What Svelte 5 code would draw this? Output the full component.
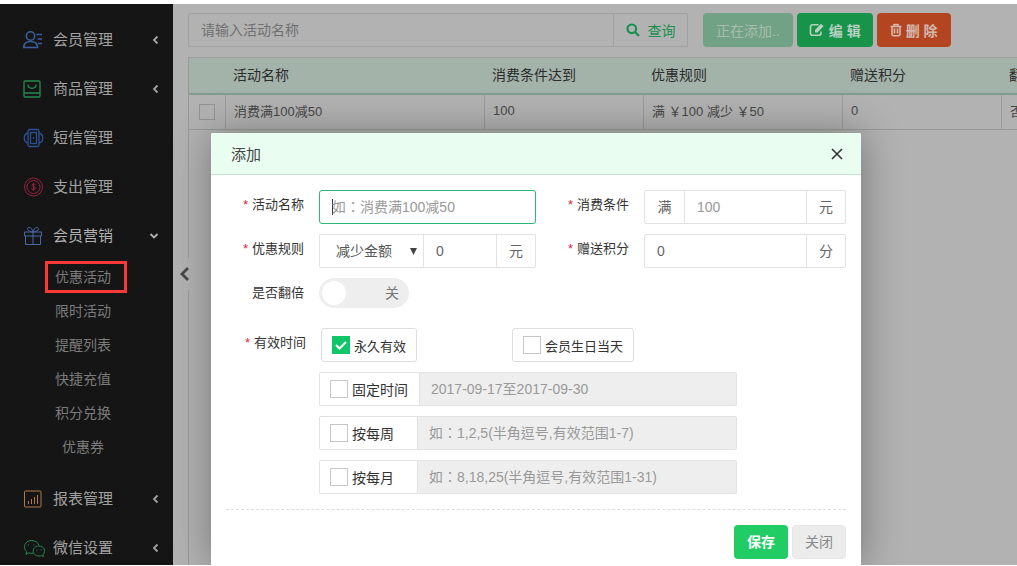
<script>
  let name = $state('');
  let condition = $state('');
  let discount = $state('0');
  let points = $state('0');
  let double = $state(false);
  let forever = $state(true);
  let birthday = $state(false);

  const above = [
    { icon: 'member', label: '会员管理', arrow: 'left' },
    { icon: 'goods', label: '商品管理', arrow: 'left' },
    { icon: 'sms', label: '短信管理', arrow: '' },
    { icon: 'expense', label: '支出管理', arrow: '' },
    { icon: 'gift', label: '会员营销', arrow: 'down', open: true }
  ];
  const children = ['优惠活动', '限时活动', '提醒列表', '快捷充值', '积分兑换', '优惠券'];
  const below = [
    { icon: 'report', label: '报表管理', arrow: 'left' },
    { icon: 'wechat', label: '微信设置', arrow: 'left' }
  ];
  const headers = ['活动名称', '消费条件达到', '优惠规则', '赠送积分', '翻倍'];
  const cells = ['消费满100减50', '100', '满 ￥100 减少 ￥50', '0', '否'];
  const periods = [
    { id: 'fixed', label: '固定时间', hint: '2017-09-17至2017-09-30' },
    { id: 'weekly', label: '按每周', hint: '如：1,2,5(半角逗号,有效范围1-7)' },
    { id: 'monthly', label: '按每月', hint: '如：8,18,25(半角逗号,有效范围1-31)' }
  ];
</script>

{#snippet icon(kind)}
  <svg class="icon {kind}" viewBox="0 0 22 20" aria-hidden="true">
    {#if kind === 'member'}
      <circle cx="7.500" cy="6" r="4.200" />
      <path d="M.8 17.500C.8 13.500 3.200 11.500 7.500 11.500s7 2 7 6zM13.500 4.500h5.500M14.500 9h4.500M15 13.500h4" />
    {:else if kind === 'goods'}
      <rect x="1" y="2" width="16" height="16" rx="1" />
      <path d="M1 14h16M5 5.500c0 5 8 5 8 0" />
    {:else if kind === 'sms'}
      <rect x="5" y="1.500" width="11" height="17" rx="1.500" />
      <rect x="7.500" y="4.500" width="6" height="11" />
      <path d="M5 5C0 6 0 14 5 15M16 5c5 1 5 9 0 10M10.500 9v2" />
    {:else if kind === 'expense'}
      <circle cx="10.500" cy="10" r="9" />
      <circle cx="10.500" cy="10" r="6.500" />
      <path d="M12.500 8c-1-1.500-4-1-3.500.5s3.500 1 3.500 2.500-3 2-4 .5M10.500 6v8" />
    {:else if kind === 'gift'}
      <path d="M1.500 6h17v4h-17zM2.500 10v8.500h15V10M10 6v12.500M9.500 6C4 5.500 3.500 1.500 6 1.500S9.500 4 10 6c.5-2 1.500-4.500 4-4.500s2 4-3.500 4.500" />
    {:else if kind === 'report'}
      <rect x="1.500" y="2" width="16.500" height="16" rx="1" />
      <path d="M5.500 12v3M8.500 10v5M11.500 8v7M14.500 6v9" />
    {:else}
      <path d="M10 15.200c-1.500.3-3 .1-4.300-.4L3 16.500l.6-2.900C-.5 10 1.500 2.500 8.500 2.500c4 0 6.800 2.300 7.500 5" />
      <path d="M16 8c-7.500 0-8 10 0 10 1 0 1.800-.2 2.500-.5l2 1-.5-2C23.500 13 21 8 16 8z" />
      <path d="M5.500 6.500v1M11 6.500v1M14 11.500v1M18 11.500v1" />
    {/if}
  </svg>
{/snippet}

{#snippet entry(item)}
  <a class="entry" class:open={item.open} href="#menu">
    {@render icon(item.icon)}
    <span>{item.label}</span>
    {#if item.arrow}
      <svg class="arrow {item.arrow}" viewBox="0 0 10 10" aria-hidden="true">
        <path d={item.arrow === 'left' ? 'M6.500 1.500 3 5l3.500 3.500' : 'M1.500 3l3.500 3.500L8.500 3'} />
      </svg>
    {/if}
  </a>
{/snippet}

<div class="page">
  <nav class="sidebar">
    {#each above as item}{@render entry(item)}{/each}
    <div class="submenu">
      {#each children as child, i}
        <a href="#sub" class:marked={i === 0}>{child}</a>
      {/each}
    </div>
    {#each below as item}{@render entry(item)}{/each}
  </nav>

  <main class="content">
    <div class="toolbar">
      <div class="search">
        <input type="text" aria-label="活动名称" placeholder="请输入活动名称" />
        <button type="button">
          <svg viewBox="0 0 14 14" width="14" height="14" aria-hidden="true"><circle cx="5.800" cy="5.800" r="4.300" /><path d="M9 9l4 4" /></svg>
          查询
        </button>
      </div>
      <div class="actions">
        <button type="button" class="adding">正在添加..</button>
        <button type="button" class="edit">
          <svg viewBox="0 0 16 14" width="16" height="14" aria-hidden="true"><path d="M9.500 1.800H3.500A2 2 0 0 0 1.500 3.800v6.500a2 2 0 0 0 2 2H10a2 2 0 0 0 2-2V8.500" /><path class="solid" d="M6 7 12 .8l2.600 2.500L8.500 9.500H6z" /></svg>
          编 辑
        </button>
        <button type="button" class="remove">
          <svg viewBox="0 0 12 14" width="12" height="14" aria-hidden="true"><path d="M.5 3.500h11M2 3.500v7.700a1.500 1.500 0 0 0 1.500 1.500h5a1.500 1.500 0 0 0 1.500-1.500V3.500M4 3V1.500h4V3M4.500 5.500v5M7.500 5.500v5" /></svg>
          删 除
        </button>
      </div>
    </div>

    <div class="grid">
      <table>
        <colgroup><col class="c-check" /><col class="c-name" /><col class="c-cond" /><col class="c-rule" /><col class="c-cond" /><col class="c-cond" /></colgroup>
        <thead>
          <tr><th></th>{#each headers as h}<th>{h}</th>{/each}</tr>
        </thead>
        <tbody>
          <tr>
            <td class="pick"><input type="checkbox" aria-label="消费满100减50" /></td>
            {#each cells as c}<td>{c}</td>{/each}
          </tr>
        </tbody>
      </table>
    </div>
    <button type="button" class="collapse" aria-label="收起">
      <svg viewBox="0 0 10 16" width="10" height="16" aria-hidden="true"><path d="M9 2 3 8l6 6" /></svg>
    </button>
  </main>

  <div class="dialog" role="dialog" aria-labelledby="dialog-title">
    <header>
      <h2 id="dialog-title">添加</h2>
      <button type="button" aria-label="关闭">
        <svg viewBox="0 0 12 12" width="12" height="12" aria-hidden="true"><path d="M1 1l10 10M11 1 1 11" /></svg>
      </button>
    </header>
    <form>
      <div class="fields">
        <label class="caption" for="name"><i>*</i>活动名称</label>
        <div class="group focused"><input id="name" type="text" placeholder="如：消费满100减50" bind:value={name} /></div>
        <label class="caption" for="condition"><i>*</i>消费条件</label>
        <div class="group">
          <span class="unit">满</span>
          <input id="condition" type="text" placeholder="100" bind:value={condition} />
          <span class="unit">元</span>
        </div>

        <label class="caption" for="discount"><i>*</i>优惠规则</label>
        <div class="group">
          <div class="select">
            <select aria-label="优惠规则"><option>减少金额</option></select>
            <svg viewBox="0 0 7 7" width="7" height="7" aria-hidden="true"><path d="M0 0h7L3.500 7z" /></svg>
          </div>
          <input id="discount" type="text" bind:value={discount} />
          <span class="unit">元</span>
        </div>
        <label class="caption" for="points"><i>*</i>赠送积分</label>
        <div class="group">
          <input id="points" type="text" bind:value={points} />
          <span class="unit">分</span>
        </div>

        <label class="caption" for="double">是否翻倍</label>
        <label class="switch">
          <input id="double" type="checkbox" bind:checked={double} />
          <span>关</span>
        </label>
      </div>

      <fieldset>
        <legend class="caption"><i>*</i>有效时间</legend>
        <div class="periods">
          <div class="pair">
            <label class="tick"><input type="checkbox" bind:checked={forever} />永久有效</label>
            <label class="tick"><input type="checkbox" bind:checked={birthday} />会员生日当天</label>
          </div>
          {#each periods as p}
            <div class="group period">
              <label class="tick {p.id}"><input type="checkbox" />{p.label}</label>
              <input type="text" aria-label={p.label} placeholder={p.hint} disabled />
            </div>
          {/each}
        </div>
      </fieldset>

      <footer>
        <button type="button" class="save">保存</button>
        <button type="button" class="close">关闭</button>
      </footer>
    </form>
  </div>
</div>

<style>
  :global(body) { margin: 0; background: #fff; }
  .page, .page :is(input, select, button) {
    font-family: "Liberation Sans", "Noto Sans CJK SC", sans-serif;
    font-size: 14px;
  }
  .page * { box-sizing: border-box; }
  .page {
    position: relative;
    display: flex;
    height: 100vh;
    box-sizing: border-box;
    border-top: 4px solid #fff;
    border-bottom: 1px solid #fff;
    overflow: hidden;
  }
  button { cursor: pointer; padding: 0; border: 0; background: none; }
  input { min-width: 0; outline: 0; border-radius: 0; }
  svg { fill: none; stroke: currentColor; }

  .sidebar { flex: 0 0 173px; padding-top: 11px; background: #151515; }
  .entry {
    display: flex;
    align-items: center;
    height: 49px;
    padding: 0 12px 0 23px;
    color: #a2a2a2;
    font-size: 15px;
    text-decoration: none;
  }
  .entry.open { color: #b2b2b2; }
  .entry span { flex: 1; padding-bottom: 2px; }
  .icon { width: 22px; height: 20px; margin-right: 8px; }
  .member { color: #3b5f9e; stroke-width: 1.6; }
  .goods { color: #23894f; stroke-width: 1.3; }
  .sms { color: #2c5296; stroke-width: 1.3; }
  .expense { color: #99213f; }
  .gift { color: #4668a8; }
  .report { color: #b07a4c; }
  .wechat { color: #278552; }
  .arrow { width: 10px; height: 10px; stroke-width: 1.8; }
  .arrow.down { margin-right: 2px; }
  .submenu { display: flex; flex-direction: column; padding: 0 46px 10px 45px; }
  .submenu a {
    height: 34px;
    line-height: 34px;
    color: #7b7b7b;
    text-align: center;
    text-decoration: none;
    white-space: nowrap;
    margin-right: 6px;
  }
  .submenu a.marked { margin: 1px 0 1px; height: 32px; line-height: 26px; border: 3px solid #f93838; padding-right: 6px; }

  .content { position: relative; flex: 1; min-width: 0; display: flex; flex-direction: column; padding: 9px 0 0 15px; background: #b2b2b2; }
  .toolbar { display: flex; gap: 15px; margin-bottom: 10px; }
  .search { display: flex; flex: 0 1 500px; height: 34px; border: 1px solid #a1a1a1; border-radius: 2px; }
  .search input { flex: 1; padding: 0 12px; border: 0; background: none; }
  .search input::placeholder { color: #707070; opacity: 1; }
  .search button { display: flex; align-items: center; justify-content: center; gap: 8px; width: 74px; padding-bottom: 1px; border-left: 1px solid #a1a1a1; color: #159050; }
  .search svg { stroke-width: 2.2; }
  .actions { display: flex; gap: 4px; }
  .actions button { display: flex; align-items: center; justify-content: center; gap: 4px; height: 34px; padding: 0 12px 1px; border-radius: 4px; color: #b8cfc1; font-weight: bold; white-space: nowrap; }
  .actions svg { stroke-width: 1.6; }
  .actions .solid { fill: currentColor; stroke: none; }
  .actions .adding { padding: 0 13px 1px; background: #71a285; color: #a9bcb0; font-weight: normal; }
  .actions .edit { background: #179449; }
  .actions .remove { padding: 0 13px 1px; background: #b34621; color: #d5b9ae; }

  .grid { flex: 1; border-left: 1px solid #999; border-top: 1px solid #9b9b9b; overflow: hidden; }
  table { table-layout: fixed; width: 972px; border-collapse: separate; border-spacing: 0; }
  .c-check { width: 37px; }
  .c-name { width: 259px; }
  .c-cond { width: 159px; }
  .c-rule { width: 199px; }
  th { height: 37px; padding: 0 7px 3px; background: #a4b3aa; border-bottom: 2px solid #809c8e; color: #2c2c2c; font-weight: normal; text-align: left; }
  td { height: 35px; padding: 0 8px 3px; border-bottom: 1px solid #999; border-right: 1px solid #9c9c9c; color: #474747; font-size: 13px; white-space: nowrap; }
  .pick { padding: 0 0 0 10px; }
  input[type="checkbox"] { appearance: none; margin: 0; }
  .pick input { display: block; width: 16px; height: 16px; border: 1px solid #949494; }
  .collapse { position: absolute; left: 3px; top: 254px; width: 15px; height: 32px; background: #b2b2b2; color: #484848; }
  .collapse svg { display: block; margin-left: 3px; stroke-width: 2.8; }

  .dialog {
    position: absolute;
    left: 211px;
    top: 129px;
    bottom: 0;
    width: 650px;
    background: #fff;
    border-radius: 2px 2px 0 0;
    box-shadow: 1px 1px 40px rgba(0, 0, 0, 0.35);
  }
  header { display: flex; align-items: center; justify-content: space-between; height: 42px; padding: 0 18px 0 20px; background: #eafdf1; border-bottom: 1px solid #c9dfd3; border-radius: 2px 2px 0 0; }
  h2 { margin: 0; padding-bottom: 1px; color: #444; font-size: 15px; font-weight: normal; }
  header button { display: flex; color: #333; }
  header svg { stroke-width: 1.6; }
  form { padding: 15px; }
  .fields { display: grid; grid-template-columns: 93px 217px 108px minmax(0, 1fr); grid-auto-rows: 34px; row-gap: 10px; }
  .caption { padding-right: 15px; color: #333; font-size: 13px; line-height: 30px; text-align: right; }
  .caption i { margin-right: 4px; color: #e2243e; font-style: normal; }
  .group { display: flex; height: 34px; border: 1px solid #e2e2e2; border-radius: 2px; color: #666; }
  .group > input { flex: 1; padding: 0 12px; border: 0; background: none; color: #666; }
  .group input::placeholder { color: #999; opacity: 1; font-family: "Liberation Sans", "Noto Sans CJK TC", sans-serif; }
  .focused { border-color: #28b878; border-radius: 3px; background: linear-gradient(#334, #334) 12px center / 1px 16px no-repeat; }
  .unit { flex: 0 0 39px; line-height: 32px; text-align: center; }
  .group > * + * { border-left: 1px solid #e2e2e2 !important; }
  .select { position: relative; flex: 0 0 103px; }
  .select svg { position: absolute; right: 6px; top: 13px; fill: #444; stroke: none; }
  select { appearance: none; width: 100%; height: 32px; padding: 0 16px; border: 0; outline: 0; background: none; color: #555; }
  .switch { position: relative; width: 90px; height: 30px; border-radius: 15px; background: #eee; color: #777; line-height: 30px; }
  .switch input { position: absolute; left: 3px; top: 3px; width: 24px; height: 24px; border-radius: 50%; background: #fff; }
  .switch input:checked { left: 63px; }
  .switch span { padding-left: 66px; }

  fieldset { display: flex; margin: 16px 0 0; padding: 0; border: 0; min-width: 0; }
  legend { float: left; width: 95px; flex: none; }
  .periods { flex: 1; display: flex; flex-direction: column; gap: 10px; margin: 0 109px 0 -2px; }
  .pair { display: grid; grid-template-columns: 191px 1fr; justify-items: start; padding-left: 2px; }
  .tick { display: flex; align-items: center; gap: 4px; color: #333; font-size: 13px; white-space: nowrap; }
  .pair .tick { height: 34px; padding: 0 10px; border: 1px solid #dedede; border-radius: 3px; }
  .tick input { width: 18px; height: 18px; border: 1px solid #c6c6c6; background: #fff; }
  .tick input:checked { border-color: #0fc768; background: #0fc768 url("data:image/svg+xml,%3Csvg xmlns='http://www.w3.org/2000/svg' viewBox='0 0 16 16'%3E%3Cpath d='M3 8l3.500 3.500L13 5' fill='none' stroke='white' stroke-width='2'/%3E%3C/svg%3E") center / 16px 16px no-repeat; }
  .period .tick { flex: 0 0 97px; padding-left: 10px; font-size: 14px; }
  .period .fixed { flex-basis: 99px; }
  .period > input { padding-left: 11px; background: #eee; }

  footer { display: flex; justify-content: flex-end; gap: 4px; margin-top: 15px; padding-top: 15px; border-top: 1px dashed #ddd; }
  footer button { width: 54px; height: 34px; padding-bottom: 2px; border-radius: 4px; }
  .save { background: #22cc64; color: #fff; font-weight: bold; }
  .close { border: 1px solid #e6e6e6; background: #ececec; color: #888; }
</style>
